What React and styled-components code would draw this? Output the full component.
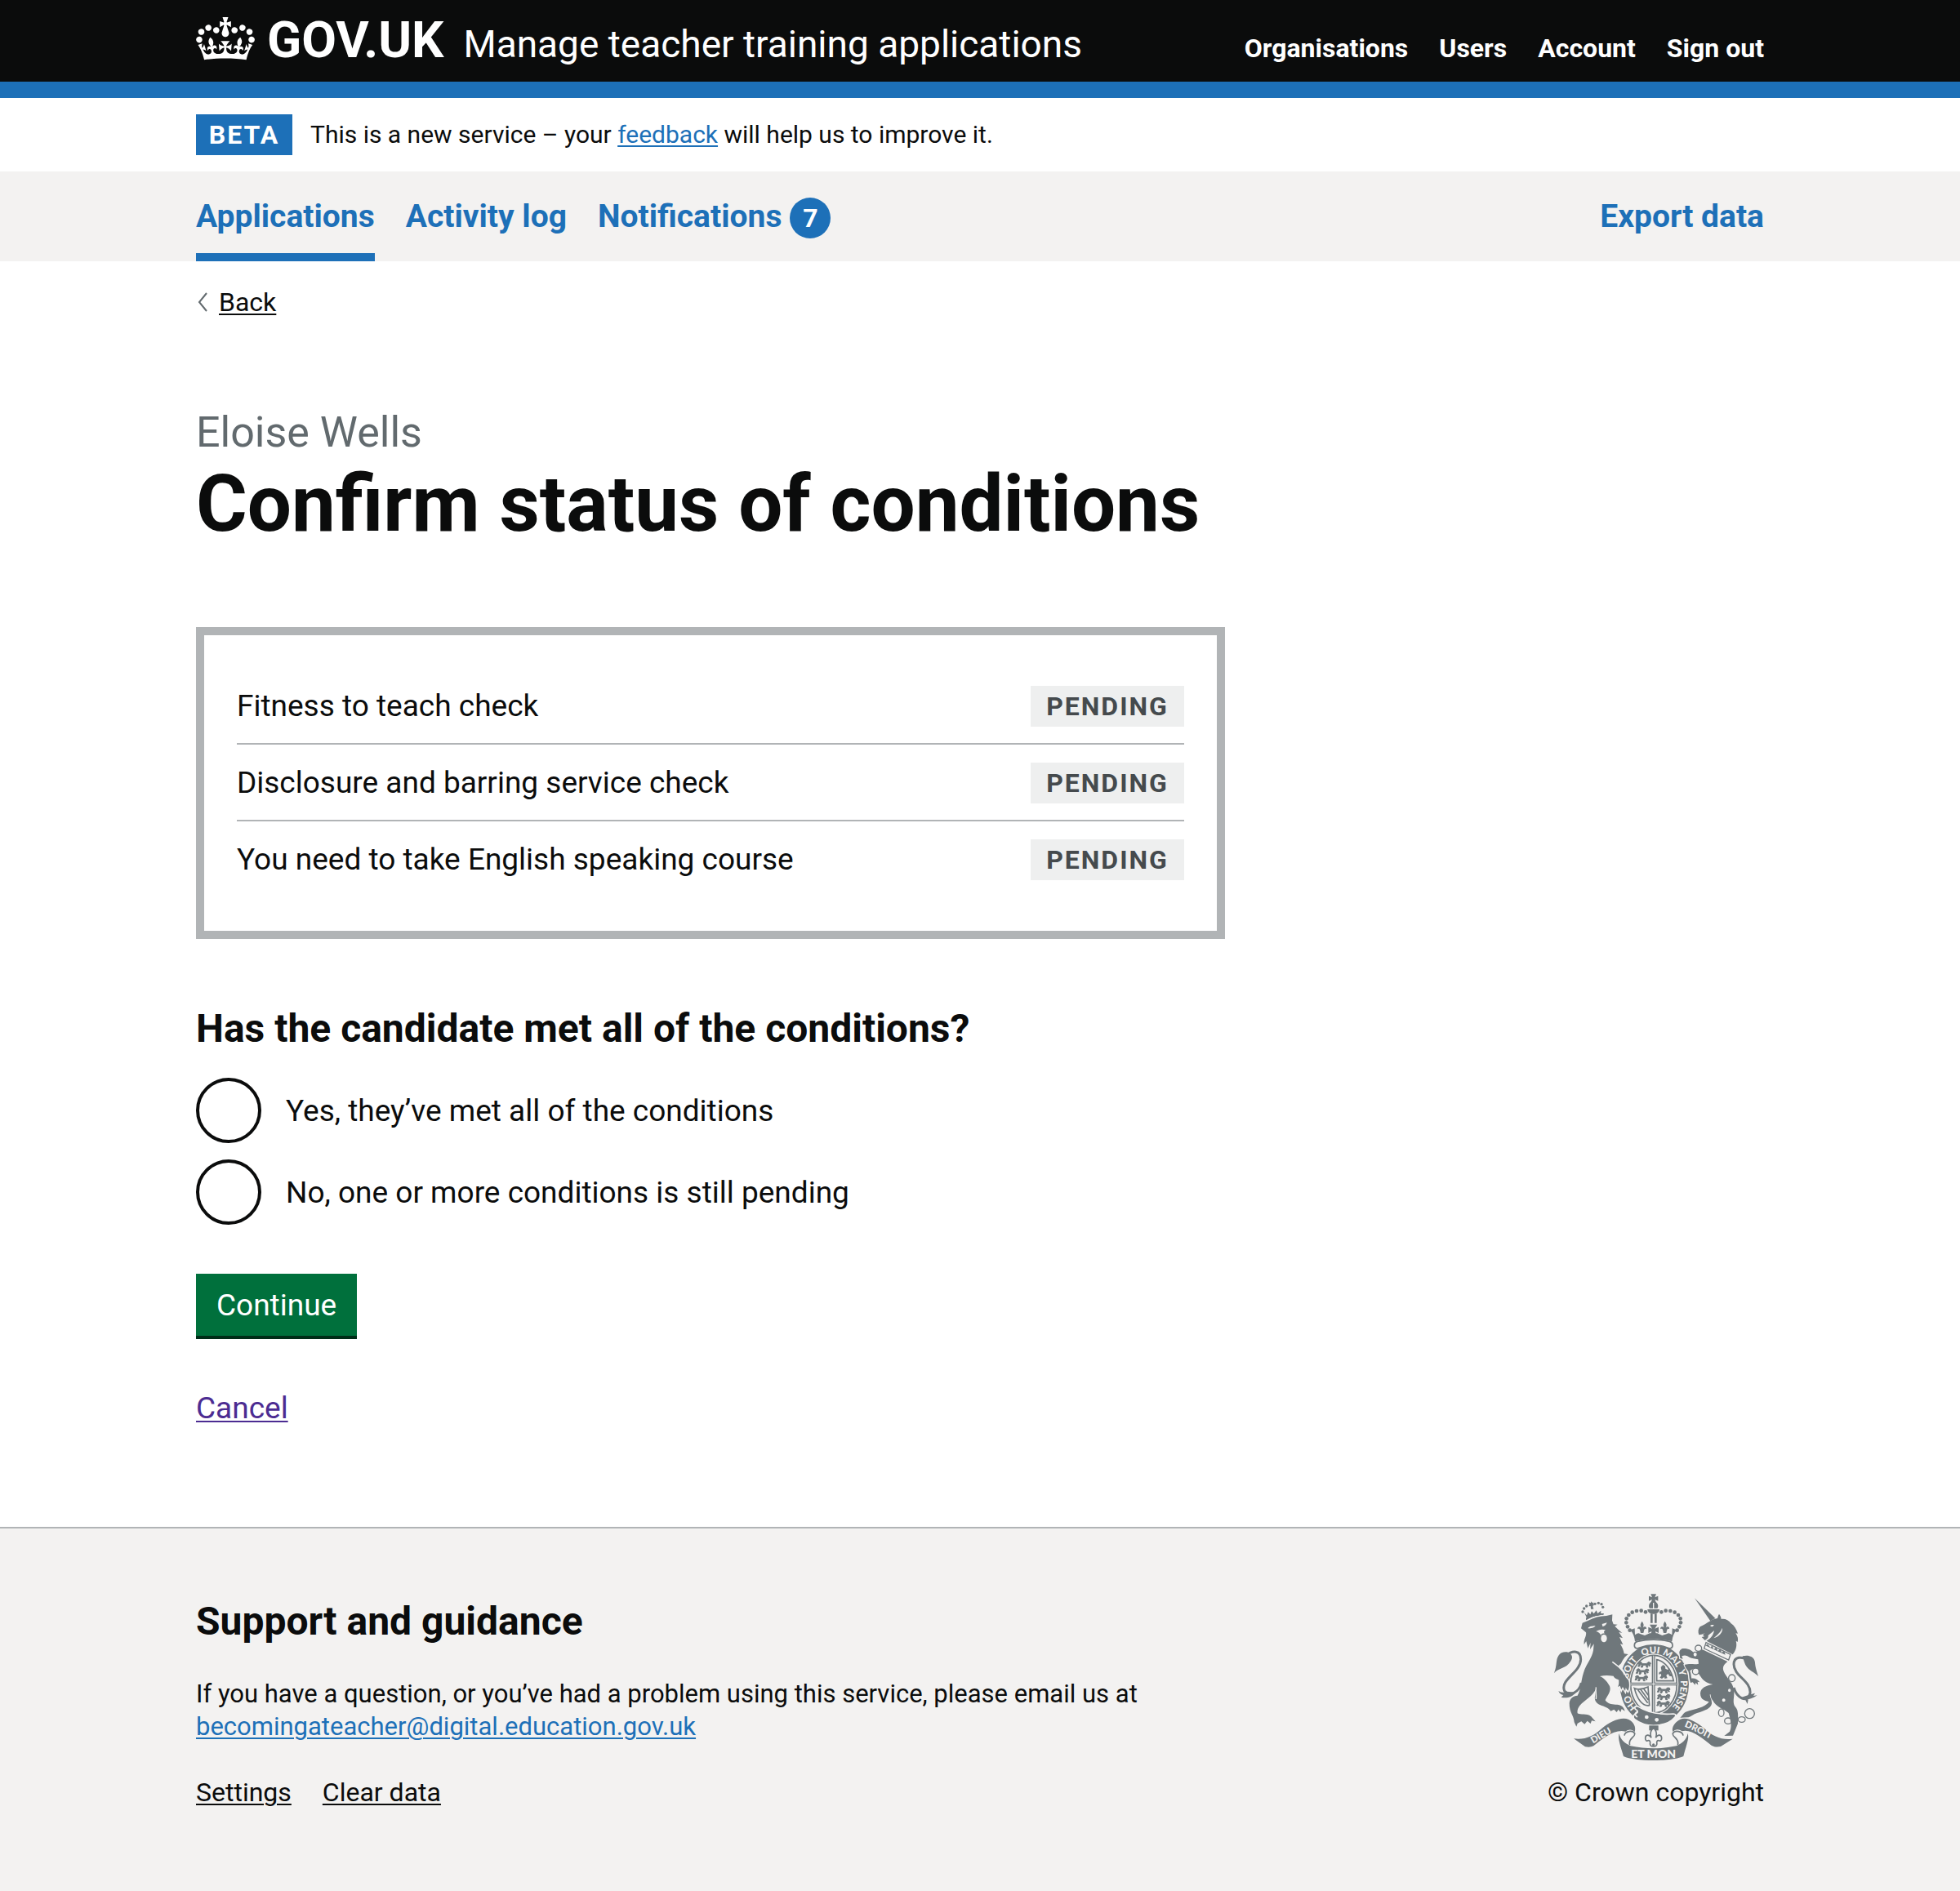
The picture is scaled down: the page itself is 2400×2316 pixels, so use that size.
import React from "react";
import styled, { createGlobalStyle, css } from "styled-components";

const color = {
  black: "#0b0c0c",
  white: "#ffffff",
  blue: "#1d70b8",
  lightGrey: "#f3f2f1",
  midGrey: "#b1b4b6",
  secondary: "#626a6e",
  crest: "#6f777b",
  green: "#00703c",
  greenShadow: "#002d18",
  visited: "#4c2c92",
  tagBg: "#eeefef",
  tagText: "#454a4d",
};

const GlobalStyle = createGlobalStyle`
  *, *::before, *::after { box-sizing: border-box; }
  body {
    margin: 0;
    background: ${color.lightGrey};
    color: ${color.black};
    font-family: Roboto, "Liberation Sans", Arial, sans-serif;
    font-size: 37px;
    line-height: 50px;
  }
`;

/* Shared pieces */

const Container = styled.div`
  width: calc(100% - 60px);
  max-width: 1920px;
  margin: 0 auto;
`;

const TwoThirds = styled.div`
  max-width: 1260px;
`;

const Link = styled.a`
  color: ${(p) => color[p.$tone || "blue"]};
  text-decoration: underline;
  text-decoration-thickness: 2px;
  text-underline-offset: 3px;
`;

const Tag = styled.strong`
  display: inline-block;
  flex: none;
  min-width: ${(p) => (p.$phase ? 118 : 188)}px;
  padding: 0 14px;
  background: ${(p) => (p.$phase ? color.blue : color.tagBg)};
  color: ${(p) => (p.$phase ? color.white : color.tagText)};
  font-size: 32px;
  font-weight: 700;
  line-height: 50px;
  letter-spacing: 2px;
  text-align: center;
  text-transform: uppercase;
`;

const Heading2 = styled.h2`
  margin: 0;
  font-size: 48px;
  font-weight: 700;
  line-height: 68px;
`;

/* Header */

const Header = styled.header`
  background: ${color.black};
  border-bottom: 20px solid ${color.blue};
  color: ${color.white};
`;

const HeaderBar = styled(Container)`
  display: flex;
  flex-wrap: wrap;
  align-items: baseline;
  justify-content: space-between;
  padding: 19px 0 21px;
`;

const Brand = styled.div`
  display: flex;
  align-items: baseline;
  gap: 24px;
`;

const HomeLink = styled.a`
  display: flex;
  align-items: baseline;
  gap: 15px;
  color: inherit;
  font-size: 62px;
  font-weight: 700;
  line-height: 60px;
  text-decoration: none;
`;

const CrownSvg = styled.svg`
  flex: none;
  align-self: center;
  width: 72px;
  height: 56px;
`;

const ServiceLink = styled.a`
  color: inherit;
  font-size: 46px;
  line-height: 48px;
  text-decoration: none;
`;

const AccountList = styled.ul`
  display: flex;
  gap: 38px;
  margin: 0;
  padding: 0;
  list-style: none;
  line-height: 40px;
`;

const AccountLink = styled.a`
  display: block;
  color: inherit;
  font-size: 32px;
  font-weight: 700;
  text-decoration: none;
`;

/* Phase banner */

const PhaseBanner = styled.div`
  background: ${color.white};
`;

const PhaseContent = styled(Container)`
  display: flex;
  align-items: center;
  gap: 22px;
  padding: 20px 0;
`;

const PhaseText = styled.p`
  margin: 0;
  font-size: 30px;
  line-height: 50px;
`;

/* Primary navigation */

const PrimaryNav = styled.nav`
  background: ${color.lightGrey};
`;

const NavBar = styled(Container)`
  display: flex;
  justify-content: space-between;
`;

const NavList = styled.ul`
  display: flex;
  gap: 38px;
  margin: 0;
  padding: 0;
  list-style: none;
`;

const NavLink = styled.a`
  display: flex;
  align-items: baseline;
  gap: 10px;
  height: 110px;
  padding-top: 30px;
  color: ${color.blue};
  font-size: 39px;
  font-weight: 700;
  line-height: 50px;
  text-decoration: none;
  ${(p) =>
    p.$current &&
    css`
      box-shadow: inset 0 -10px 0 ${color.blue};
    `}
`;

const Count = styled.span`
  width: 50px;
  border-radius: 25px;
  background: ${color.blue};
  color: ${color.white};
  font-size: 32px;
  line-height: 50px;
  text-align: center;
`;

/* Main content */

const Page = styled.div`
  padding: 30px 0 120px;
  background: ${color.white};
`;

const BackLink = styled(Link)`
  display: flex;
  align-items: center;
  gap: 14px;
  width: fit-content;
  font-size: 32px;
  line-height: 40px;
`;

const BackArrow = styled.svg`
  width: 14px;
  height: 24px;
  fill: none;
  stroke: ${color.secondary};
  stroke-width: 2;
`;

const Main = styled.main`
  padding-top: 110px;
`;

const Title = styled.h1`
  margin: 0 0 98px;
  font-size: 96px;
  font-weight: 700;
  line-height: 106px;
`;

const Caption = styled.span`
  display: block;
  margin-bottom: 4px;
  color: ${color.secondary};
  font-size: 52px;
  font-weight: 400;
  line-height: 60px;
`;

const ConditionList = styled.dl`
  margin: 0 0 80px;
  padding: 40px;
  border: 10px solid ${color.midGrey};
`;

const ConditionRow = styled.div`
  display: flex;
  align-items: flex-start;
  justify-content: space-between;
  padding: 22px 0 20px;
  border-bottom: 2px solid ${color.midGrey};

  &:last-child {
    border-bottom-color: transparent;
  }
`;

const ConditionName = styled.dt``;

const ConditionStatus = styled.dd`
  display: flex;
  margin: 0;
`;

const Fieldset = styled.fieldset`
  display: flex;
  flex-direction: column;
  gap: 20px;
  min-width: 0;
  margin: 0 0 60px;
  padding: 0;
  border: 0;
`;

const Legend = styled.legend`
  padding: 0 0 30px;
  font-size: 48px;
  font-weight: 700;
  line-height: 60px;
`;

const RadioItem = styled.div`
  display: flex;
`;

const RadioInput = styled.input`
  flex: none;
  width: 80px;
  height: 80px;
  margin: 0;
  appearance: none;
  border: 4px solid ${color.black};
  border-radius: 50%;
  background: ${color.white};
  cursor: pointer;

  &:checked {
    background: radial-gradient(${color.black} 20px, ${color.white} 21px);
  }
`;

const RadioLabel = styled.label`
  padding: 16px 30px 14px;
  cursor: pointer;
`;

const Button = styled.button`
  display: block;
  margin: 0 0 64px;
  padding: 14px 25px 12px;
  border: 0;
  background: ${color.green};
  box-shadow: 0 4px 0 ${color.greenShadow};
  color: ${color.white};
  font: inherit;
  cursor: pointer;
`;

const CancelText = styled.p`
  margin: 0;
`;

/* Footer */

const Footer = styled.footer`
  padding: 80px 0 100px;
  border-top: 2px solid ${color.midGrey};
  background: ${color.lightGrey};
  font-size: 32px;
  line-height: 40px;
`;

const FooterColumns = styled(Container)`
  display: flex;
  justify-content: space-between;
  gap: 60px;
`;

const SupportText = styled.p`
  margin: 35px 0 40px;
  font-size: 31px;
`;

const FooterLinks = styled.ul`
  display: flex;
  gap: 38px;
  margin: 0;
  padding: 0;
  list-style: none;
`;

const Copyright = styled.a`
  display: flex;
  flex: none;
  flex-direction: column;
  align-items: center;
  gap: 19px;
  color: inherit;
  text-decoration: none;
`;

const CrestSvg = styled.svg`
  width: 250px;
  height: 204px;
`;

const Crown = () => (
  <CrownSvg viewBox="0 0 132 103" fill="currentColor" aria-hidden="true">
    <path d="M25 30.2c3.5 1.5 7.7-.2 9.1-3.7 1.5-3.6-.2-7.8-3.9-9.2-3.6-1.4-7.6.3-9.1 3.9-1.4 3.5.3 7.5 3.9 9zM9 39.5c3.6 1.5 7.8-.2 9.2-3.7 1.5-3.6-.2-7.8-3.9-9.1-3.6-1.5-7.6.2-9.1 3.8-1.4 3.5.3 7.5 3.8 9zM4.4 57.2c3.5 1.5 7.7-.2 9.1-3.8 1.5-3.6-.2-7.7-3.9-9.1-3.5-1.5-7.6.3-9.1 3.8-1.4 3.5.3 7.6 3.9 9.1zm38.3-21.4c3.5 1.5 7.7-.2 9.1-3.8 1.5-3.6-.2-7.7-3.9-9.1-3.6-1.5-7.6.3-9.1 3.8-1.3 3.6.4 7.7 3.9 9.1zm64.4-5.6c-3.6 1.5-7.8-.2-9.1-3.7-1.5-3.6.2-7.8 3.8-9.2 3.6-1.4 7.7.3 9.2 3.9 1.3 3.5-.4 7.5-3.9 9zm15.9 9.3c-3.6 1.5-7.7-.2-9.1-3.7-1.5-3.6.2-7.8 3.7-9.1 3.6-1.5 7.7.2 9.2 3.8 1.5 3.5-.3 7.5-3.8 9zm4.7 17.7c-3.6 1.5-7.8-.2-9.2-3.8-1.5-3.6.2-7.7 3.9-9.1 3.6-1.5 7.7.3 9.2 3.8 1.3 3.5-.4 7.6-3.9 9.1zM89.3 35.8c-3.6 1.5-7.8-.2-9.2-3.8-1.4-3.6.2-7.7 3.9-9.1 3.6-1.5 7.7.3 9.2 3.8 1.4 3.6-.3 7.7-3.9 9.1zM69.7 17.7l8.9 4.7V9.3l-8.9 2.8c-.2-.3-.5-.6-.9-.9L72.4 0H59.6l3.5 11.2c-.3.3-.6.5-.9.9l-8.8-2.8v13.1l8.8-4.7c.3.3.6.7.9.9l-5 15.4v.1c-.2.8-.4 1.6-.4 2.4 0 4.1 3.1 7.5 7 8.1h.2c.3 0 .7.1 1 .1.4 0 .7 0 1-.1h.2c4-.6 7.1-4.1 7.1-8.1 0-.8-.1-1.7-.4-2.4V34l-5.1-15.4c.4-.2.7-.6 1-.9zM66 92.8c16.9 0 32.8 1.1 47.1 3.2 4-16.9 8.9-26.7 14-33.5l-9.6-3.4c1 4.9 1.1 7.2 0 10.2-1.5-1.4-3-4.3-4.2-8.7L108.6 76c2.8-2 5-3.2 7.5-3.3-4.4 9.4-10 11.9-13.6 11.2-4.3-.8-6.3-4.6-5.6-7.9 1-4.7 5.7-5.9 8-.5 4.3-8.7-3-11.4-7.6-8.8 7.1-7.2 7.9-13.5 2.1-21.1-8 6.1-8.1 12.3-4.5 20.8-4.7-5.4-12.1-2.5-9.5 6.2 3.4-5.2 7.9-2 7.2 3.1-.6 4.3-6.4 7.8-13.5 7.2-10.3-.9-10.9-8-11.2-13.8 2.5-.5 7.1 1.8 11 7.3L80.2 60c-4.1 4.4-8 5.3-12.3 5.4 1.4-4.4 8-11.6 8-11.6H55.5s6.4 7.2 7.9 11.6c-4.2-.1-8-1-12.3-5.4l1.4 16.4c3.9-5.5 8.5-7.7 10.9-7.3-.3 5.8-.9 12.8-11.1 13.8-7.2.6-12.9-2.9-13.5-7.2-.7-5 3.8-8.3 7.1-3.1 2.7-8.7-4.6-11.6-9.4-6.2 3.7-8.5 3.6-14.7-4.6-20.8-5.8 7.6-5 13.9 2.2 21.1-4.7-2.6-11.9.1-7.7 8.8 2.3-5.5 7.1-4.2 8.1.5.7 3.3-1.3 7.1-5.7 7.9-3.5.7-9-1.8-13.5-11.2 2.5.1 4.7 1.3 7.5 3.3l-4.7-15.4c-1.2 4.4-2.7 7.2-4.3 8.7-1.1-3-.9-5.3 0-10.2l-9.5 3.4c5 6.9 9.9 16.7 14 33.5 14.8-2.1 30.8-3.2 47.7-3.2z" />
  </CrownSvg>
);

const PEARLS = [
  [408, 132], [392, 127], [375, 128], [359, 133], [346, 143],
  [338, 156], [337, 171], [342, 186], [350, 199],
];

const MOTTO = [
  ["HO", "15%"], ["SOIT", "34%"], ["QUI", "48%"],
  ["MAL", "60%"], ["Y", "69%"], ["PENSE", "81%"],
];

const PassantLion = ({ x, y }) => (
  <path
    transform={`translate(${x} ${y})`}
    stroke={color.crest}
    strokeWidth="3"
    d="M2 8l6-6 6 2 2 5h16l6-6 8 1 2 6-5 2 3 5-4 1-4-6-2 5 2 5h-6l-1-8H20l-2 8h-6l3-8-5-3-3 8H1l4-9z"
  />
);

const Fleur = ({ x, y }) => (
  <path
    transform={`translate(${x} ${y})`}
    d="M0-23c6 8 8 14 3 24 6-8 15-5 13 5-2-3-6-3-8 2l-3 12h-10l-3-12c-2-5-6-5-8-2-2-10 7-13 13-5-5-10-3-16 3-24z"
  />
);

const Crest = () => (
  <CrestSvg viewBox="72 65 750 612" fill={color.crest} aria-hidden="true">
    {/* Central crown */}
    <path d="M427 66h20l-5 12 12-5v18l-12-5 5 12h-20l5-12-12 5V73l12 5z" />
    <circle cx="437" cy="110" r="17" />
    <path d="M415 122h44c0 10-8 17-22 17s-22-7-22-17z" />
    <path d="M435 98h4v22h-4zM419 118h36v4h-36z" fill={color.lightGrey} />
    <path d="M426 138h8v34h-8zM441 138h8v34h-8z" />
    {PEARLS.map(([x, y]) => (
      <React.Fragment key={x}>
        <circle cx={x} cy={y} r="7" />
        <circle cx={874 - x} cy={y} r="7" />
      </React.Fragment>
    ))}
    <Fleur x={395} y={189} />
    <Fleur x={479} y={189} />
    <path d="M423 178h28l-9 15 14-6v22l-12-6 3 12h-20l3-12-12 6v-22l14 6z" />
    <path d="M352 198l16-6 1 24c8-6 14-9 18-4l18 6 18-8h28l18 8 18-6c4-5 10-2 18 4l1-24 16 6c-10 12-15 24-17 42-42-11-94-11-136 0-2-18-7-30-17-42z" />

    {/* Garter and shield */}
    <ellipse cx="440" cy="397" rx="130" ry="150" fill={color.lightGrey} />
    <ellipse cx="440" cy="397" rx="127" ry="147" />
    <ellipse cx="438" cy="397" rx="91" ry="112" fill={color.lightGrey} />
    <ellipse cx="438" cy="397" rx="85" ry="106" fill="none" stroke={color.crest} strokeWidth="5" />
    <path
      d="M378 240c40-9 78-9 118 0 14 3 14 22 4 25-4 1-8 0-12-2-34-13-68-13-102 0-4 2-8 3-12 2-10-3-10-22 4-25z"
      fill={color.lightGrey}
      stroke={color.crest}
      strokeWidth="5"
    />
    <path d="M431 292h12v212h-12zM354 391h168v11H354z" />
    <path d="M436 292h3v212h-3zM354 395h168v3H354z" fill={color.lightGrey} />
    <PassantLion x={379} y={313} />
    <PassantLion x={372} y={338} />
    <PassantLion x={368} y={363} />
    <PassantLion x={450} y={407} />
    <PassantLion x={450} y={432} />
    <PassantLion x={448} y={457} />
    <path d="M449 307c32 6 54 38 62 78h-62z" fill="none" stroke={color.crest} strokeWidth="5" />
    <path d="M464 334l8-8 8 5 1 9 8 4 8-5-2 10 6 10 6 2-2 8-9-2-6-8-6 6 4 10-10 2-1-6-9 6-8-4 6-8-2-6-8 2 2-8 9-4-2-8z" />
    <path
      d="M367 412c16 8 34 2 50-5l5 68c-26 6-46-26-55-63zM380 418l36 48M390 417l28 38M401 414l17 24"
      fill="none"
      stroke={color.crest}
      strokeWidth="5"
    />
    <path id="garter-path" d="M440 511A97 114 0 0 1 440 283A97 114 0 0 1 440 511" fill="none" />
    <g fill={color.lightGrey} fontFamily='Lato, "Liberation Sans", sans-serif' fontWeight="900" fontSize="34" textAnchor="middle">
      {MOTTO.map(([word, at]) => (
        <text key={word}>
          <textPath href="#garter-path" startOffset={at}>{word}</textPath>
        </text>
      ))}
    </g>

    {/* Buckle and strap */}
    <path
      d="M382 480c38 24 76 30 128 26 8 0 12 6 6 12-28 34-102 44-148 8-10-8-2-20 6-22 8-4 4-12-2-14-8-6 0-16 10-10z"
      stroke={color.lightGrey}
      strokeWidth="5"
    />
    <path d="M376 498c-8 6-8 14 2 20" fill="none" stroke={color.lightGrey} strokeWidth="5" />
    <circle cx="412" cy="518" r="7" fill={color.lightGrey} />
    <circle cx="449" cy="528" r="7" fill={color.lightGrey} />

    {/* Lion */}
    <path d="M190 162c18-14 40-20 63-20l1-5c-24-2-46 5-65 17z" />
    <path d="M183 134l9 10 5-12 8 9 5-12 8 9 9-12 5 11 12-10-1 18c-18 0-34 5-49 13z" />
    {[[177, 131], [182, 119], [191, 110], [222, 102], [235, 99], [246, 103], [251, 114]].map(([x, y]) => (
      <circle key={x} cx={x} cy={y} r="5" />
    ))}
    <path d="M200 96l6 3 3-6 3 5 5-1-2 6 5 3-6 3 3 12h-10l-1-11-7 1 3-6z" />
    <path
      d="M171 192l5-20 20-8c22-12 44-17 68-18l22-5-1 22 5 14 15 1-10 6 14 14 13 11-12-3 14 22-12-4 13 28-10-3c6 12 12 20 14 36l15 2c-12 8-20 20-26 34l-10 9c14 12 23 28 27 42l10 10c4 12 4 28-2 40l-8-12-2 12-9-15-5 10-5-14-8 4c6-12 3-18 4-25-5-5-16-4-20-15-18-2-32-3-50 1 18 8 28 22 36 36 8 20-12 40-16 52 8 12 22 16 38 16 14 0 30 4 34 24l-12-8-4 12-8-10-6 10-10-10-12 6c-10-14-24-16-38-22-18-8-22-20-20-32l4-28c-14 30-40 40-60 62-6 8-10 18-8 28 12 8 32-2 50 12l16 18-14-3-4 11-12-10-10 12-12-10-14 7-4 12-8-16c-2-28-18-34-18-70 2-20 14-26 30-28 14-26 12-54 22-84 8-30 30-50 36-82l2-24-14 20 2-24-10 20-6-26-8 12c-2-20 10-30 7-44z"
      stroke={color.lightGrey}
      strokeWidth="9"
      paintOrder="stroke"
    />
    <path d="M190 162c18-14 40-20 63-20l1-5c-24-2-46 5-65 17z" />
    <path d="M196 192c6-8 14-8 28-9-4 7-16 10-28 9zM248 176l18-5c-2 8-9 13-16 14z" fill={color.lightGrey} />
    <path d="M226 203c8-6 24-10 36-4-8 0-8 8-4 12-8-2-14 0-14 8-2-8-8-14-18-16z" fill={color.lightGrey} />
    <ellipse cx="255" cy="229" rx="11" ry="14" fill={color.lightGrey} />
    <path d="M286 315c18 14 36 24 46 48" fill="none" stroke={color.lightGrey} strokeWidth="5" />
    <path d="M226 408c-2 18 2 28 0 44" fill="none" stroke={color.lightGrey} strokeWidth="4" />
    <path d="M172 392c-8 36-44 52-62 30-18-42 60-68 60-116 0-34-30-34-54-14" fill="none" stroke={color.crest} strokeWidth="9" />
    <path d="M124 280c-24-6-38 8-42 28-3 16-2 28-10 48 18-20 44-16 60-42 10-14 8-26-8-34zM118 424c-16 6-24 2-30-2 4 10 10 14 18 15l-8 8c20 6 42-2 54-18z" />

    {/* Unicorn */}
    <path d="M588 81l76 74-18 10z" />
    <path d="M646 165c10-8 18-8 26-10 2-6 2-10 6-16 4 6 8 12 8 19 14-2 28 4 36 16 12 8 20 22 25 37l-8-1c8 12 10 22 7 32l-6-4c4 16 2 32-12 50L632 238c10-6 24-16 28-38-10 8-14 12-22 18 2 8-4 14-12 18l-12-12 10-2-6-6 8-6-12 4-10 2c-4-12-3-22 4-30 14-6 22-12 38-21z" />
    <path d="M645 182c4-4 10-4 14-2-2 6-8 8-14 2zM690 190c2 18-12 32-32 38 10-10 24-18 32-38z" fill={color.lightGrey} />
    <path d="M630 244l90 44-7 20-90-42z" fill={color.lightGrey} stroke={color.crest} strokeWidth="4" />
    <path d="M636 250l10 12 7-7 5 14 10-8 5 14 10-8 4 14 10-6 4 14-74-34z" />
    <path
      d="M617 270l92 44c-16 12-22 24-10 44 14 24 36 40 34 74 0 18-6 34 4 48 14 14 10 38 10 62l-18 44-32 1 20-16c10-22 2-46-4-68-18-16-46-22-58-46-10-12-6-20-10-24-4 10 8 20 6 36-4 18-24 24-54 34-16 6-24 14-32 16l-30 1c10-6 8-16 24-22 30-10 66-14 82-36-14-6-32-6-32-32 2-20 22-28 46-32-14-4-34-10-44-28l-10-14-20-14-10 6c4 8 4 20 6 28 10-2 22 2 30 14l-8-2 2 12-9-8-2 8-9-10-8 2c-6-18-4-30-8-42-4-6-10-12-14-24 20-6 36 0 52-4l-2-16c-12-4-22-2-32-8-12-8-18-8-28-4l4 10-10-2-2-16c-4-8 2-16 10-20 14 0 28 0 42 16z"
      stroke={color.lightGrey}
      strokeWidth="7"
      paintOrder="stroke"
    />
    <path d="M732 410c12 38 50 60 60 20 4-46-60-62-60-106 0-28 30-32 56-12" fill="none" stroke={color.crest} strokeWidth="9" />
    <path d="M764 294c24-6 44 2 46 24 1 14 4 26 12 50-14-16-34-20-46-40-6-12-8-22-12-34zM752 448c22 8 42 8 66-10l-14 2 6-10-22 6zM770 446l12 24 4-22z" />
    {[[602, 265, 12, 11], [590, 288, 8, 9], [592, 350, 12, 12], [725, 375, 12, 13], [716, 420, 7, 8], [695, 456, 8, 8]].map(([x, y, rx, ry]) => (
      <ellipse key={x} cx={x} cy={y} rx={rx} ry={ry} fill={color.lightGrey} stroke={color.crest} strokeWidth="4" />
    ))}
    {[[686, 502, 10, 14], [711, 532, 13, 11], [761, 527, 13, 10], [790, 505, 18, 18]].map(([x, y, rx, ry]) => (
      <ellipse key={x} cx={x} cy={y} rx={rx} ry={ry} fill="none" stroke={color.crest} strokeWidth="4" />
    ))}

    {/* Ribbon */}
    <path d="M144 597c40 6 74-10 104-38 30-24 70-44 98-32 18 8 28 28 22 46-8-10-22-12-34-2-42-10-84 28-116 52-12 7-22 5-32 4z" />
    <path d="M728 598c-40 6-74-10-104-38-30-24-62-44-88-34-18 8-34 28-28 46 8-10 22-12 34-2 34-10 76 28 108 52 12 7 24 6 34 4z" />
    <path d="M330 586c2-16 30-22 38-8 4 14-26 18-18 42M546 586c-2-16-30-22-38-8-4 14 26 18 18 42" fill="none" stroke={color.crest} strokeWidth="5" />
    <path d="M311 578c4 24 22 36 42 46 56 12 112 12 168 0 20-10 38-22 42-46 6 18-6 44-16 84-40 20-180 20-220 0-12-40-22-66-16-84z" />
    <path id="dieu-path" d="M210 619q48-30 108-62" fill="none" />
    <path id="droit-path" d="M550 553q54 22 128 64" fill="none" />
    <g fill={color.lightGrey} fontFamily='Lato, "Liberation Sans", sans-serif' fontWeight="900">
      <text fontSize="34"><textPath href="#dieu-path" startOffset="6">DIEU</textPath></text>
      <text fontSize="34"><textPath href="#droit-path">DROIT</textPath></text>
      <text x="437" y="667" fontSize="42" textAnchor="middle">ET MON</text>
    </g>

    {/* Pendant fleur-de-lis */}
    <path d="M421 549h34v18h-34z" />
    <path
      d="M437 558c12 10 14 20 8 36 8-14 22-12 22 2 0 8-6 12-10 8-6-2-8 4-8 8 2 8-2 14-12 14s-14-6-12-14c0-4-2-10-8-8-4 4-10 0-10-8 0-14 14-16 22-2-6-16-4-26 8-36z"
      fill={color.lightGrey}
      stroke={color.crest}
      strokeWidth="5"
    />
    <circle cx="437" cy="620" r="5" />
  </CrestSvg>
);

const ACCOUNT_LINKS = ["Organisations", "Users", "Account", "Sign out"];

const NAV_LINKS = [
  { text: "Applications", current: true },
  { text: "Activity log" },
  { text: "Notifications", count: 7 },
];

const CONDITIONS = [
  { name: "Fitness to teach check", status: "Pending" },
  { name: "Disclosure and barring service check", status: "Pending" },
  { name: "You need to take English speaking course", status: "Pending" },
];

const OPTIONS = [
  { id: "met", text: "Yes, they’ve met all of the conditions" },
  { id: "pending", text: "No, one or more conditions is still pending" },
];

export default function App() {
  return (
    <>
      <GlobalStyle />
      <Header>
        <HeaderBar>
          <Brand>
            <HomeLink href="#">
              <Crown />
              GOV.UK
            </HomeLink>
            <ServiceLink href="#">Manage teacher training applications</ServiceLink>
          </Brand>
          <AccountList>
            {ACCOUNT_LINKS.map((text) => (
              <li key={text}>
                <AccountLink href="#">{text}</AccountLink>
              </li>
            ))}
          </AccountList>
        </HeaderBar>
      </Header>

      <PhaseBanner>
        <PhaseContent>
          <Tag $phase>Beta</Tag>
          <PhaseText>
            This is a new service – your <Link href="#">feedback</Link> will help us to improve it.
          </PhaseText>
        </PhaseContent>
      </PhaseBanner>

      <PrimaryNav aria-label="Primary">
        <NavBar>
          <NavList>
            {NAV_LINKS.map(({ text, current, count }) => (
              <li key={text}>
                <NavLink href="#" $current={current} aria-current={current ? "page" : undefined}>
                  {text}
                  {count && <Count>{count}</Count>}
                </NavLink>
              </li>
            ))}
          </NavList>
          <NavLink href="#">Export data</NavLink>
        </NavBar>
      </PrimaryNav>

      <Page>
        <Container>
          <BackLink href="#" $tone="black">
            <BackArrow viewBox="0 0 14 24" aria-hidden="true">
              <path d="M13 1L4 12l9 11" />
            </BackArrow>
            Back
          </BackLink>
          <Main>
            <TwoThirds>
              <Title>
                <Caption>Eloise Wells</Caption>
                Confirm status of conditions
              </Title>
              <ConditionList>
                {CONDITIONS.map(({ name, status }) => (
                  <ConditionRow key={name}>
                    <ConditionName>{name}</ConditionName>
                    <ConditionStatus>
                      <Tag>{status}</Tag>
                    </ConditionStatus>
                  </ConditionRow>
                ))}
              </ConditionList>
              <form>
                <Fieldset>
                  <Legend>Has the candidate met all of the conditions?</Legend>
                  {OPTIONS.map(({ id, text }) => (
                    <RadioItem key={id}>
                      <RadioInput type="radio" name="conditions" id={id} value={id} />
                      <RadioLabel htmlFor={id}>{text}</RadioLabel>
                    </RadioItem>
                  ))}
                </Fieldset>
                <Button type="button">Continue</Button>
              </form>
              <CancelText>
                <Link href="#" $tone="visited">Cancel</Link>
              </CancelText>
            </TwoThirds>
          </Main>
        </Container>
      </Page>

      <Footer>
        <FooterColumns>
          <TwoThirds>
            <Heading2>Support and guidance</Heading2>
            <SupportText>
              If you have a question, or you’ve had a problem using this service, please email us at{" "}
              <Link href="mailto:becomingateacher@digital.education.gov.uk">
                becomingateacher@digital.education.gov.uk
              </Link>
            </SupportText>
            <FooterLinks>
              <li><Link href="#" $tone="black">Settings</Link></li>
              <li><Link href="#" $tone="black">Clear data</Link></li>
            </FooterLinks>
          </TwoThirds>
          <Copyright href="#">
            <Crest />
            © Crown copyright
          </Copyright>
        </FooterColumns>
      </Footer>
    </>
  );
}
